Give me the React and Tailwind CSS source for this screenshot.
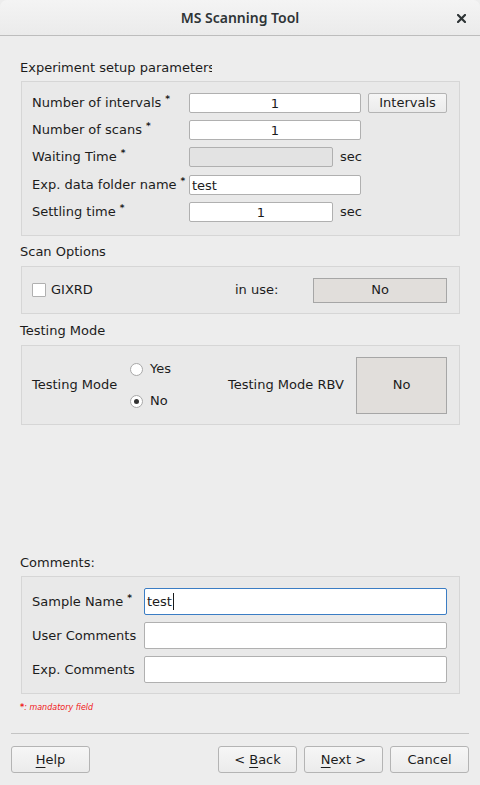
import React from "react";

const Star = () => (
  <span className="relative top-[-5px] ml-[4px] text-[9px] font-bold">*</span>
);

const Input = ({ w, value = "", center = false, disabled = false, h = "h-[20px]", focused = false }) => (
  <div
    className={`${w} ${h} rounded-[2px] border flex items-center ${
      focused ? "border-[#3b7dc4]" : "border-[#b0b0b0]"
    } ${disabled ? "bg-[#e3e3e3]" : "bg-white"} ${center ? "justify-center" : "justify-start pl-[2px]"}`}
  >
    <span className="leading-none">{value}</span>
    {focused && <span className="inline-block w-[1px] h-[17px] bg-[#1a1a1a] ml-[1px]" />}
  </div>
);

const Btn = ({ children, w = "w-[79px]" }) => (
  <div
    className={`${w} h-[27px] rounded-[3px] border border-[#b4b4b4] bg-gradient-to-b from-[#f6f6f6] to-[#ebebeb] flex items-center justify-center`}
  >
    {children}
  </div>
);

export default function App() {
  return (
    <div
      className="w-[480px] h-[785px] bg-[#ededed] flex flex-col text-[13px] text-[#1c1c1c]"
      style={{ fontFamily: '"DejaVu Sans", sans-serif' }}
    >
      {/* Title bar */}
      <div className="h-[36px] shrink-0 rounded-t-[7px] bg-gradient-to-b from-[#f4f4f4] to-[#ebebeb] border-b border-[#bdbdbd] relative flex items-center justify-center">
        <span
          className="text-[14px] font-semibold text-[#2e3436]"
          style={{ fontFamily: '"Noto Sans", sans-serif' }}
        >
          MS Scanning Tool
        </span>
        <svg className="absolute right-[14px] top-[14px]" width="9" height="9" viewBox="0 0 9 9">
          <path d="M1 1L8 8M8 1L1 8" stroke="#2e3436" strokeWidth="2.2" strokeLinecap="square" />
        </svg>
      </div>

      <div className="flex-1 flex flex-col px-[20px]">
        {/* Experiment setup */}
        <div className="mt-[24px] h-[16px] leading-[16px] w-[192px] overflow-hidden whitespace-nowrap">
          Experiment setup parameters
        </div>
        <div className="mt-[5px] ml-[1px] w-[439px] h-[155px] border border-[#d6d6d6] bg-[#e9e9e9] pl-[10px] pt-[11px] flex flex-col">
          <div className="flex items-center h-[20px]">
            <div className="w-[157px]">Number of intervals<Star /></div>
            <Input w="w-[172px]" value="1" center />
            <div className="ml-[7px]">
              <div className="w-[79px] h-[20px] rounded-[2px] border border-[#b4b4b4] bg-gradient-to-b from-[#f6f6f6] to-[#ebebeb] flex items-center justify-center">
                Intervals
              </div>
            </div>
          </div>
          <div className="flex items-center h-[20px] mt-[7px]">
            <div className="w-[157px]">Number of scans<Star /></div>
            <Input w="w-[172px]" value="1" center />
          </div>
          <div className="flex items-center h-[20px] mt-[7px]">
            <div className="w-[157px]">Waiting Time<Star /></div>
            <Input w="w-[144px]" disabled />
            <span className="ml-[7px]">sec</span>
          </div>
          <div className="flex items-center h-[20px] mt-[8px]">
            <div className="w-[157px] whitespace-nowrap">Exp. data folder name<Star /></div>
            <Input w="w-[172px]" value="test" />
          </div>
          <div className="flex items-center h-[20px] mt-[7px]">
            <div className="w-[157px]">Settling time<Star /></div>
            <Input w="w-[144px]" value="1" center />
            <span className="ml-[7px]">sec</span>
          </div>
        </div>

        {/* Scan options */}
        <div className="mt-[8px] h-[16px] leading-[16px]">Scan Options</div>
        <div className="mt-[6px] ml-[1px] w-[439px] h-[48px] border border-[#d6d6d6] bg-[#e9e9e9] pl-[10px] flex items-center">
          <div className="w-[203px] flex items-center">
            <div className="w-[14px] h-[14px] border border-[#b0b0b0] bg-white rounded-[1px]" />
            <span className="ml-[5px]">GIXRD</span>
          </div>
          <span className="w-[78px]">in use:</span>
          <div className="w-[134px] h-[25px] border border-[#a6a6a6] bg-[#e1dedb] flex items-center justify-center">
            No
          </div>
        </div>

        {/* Testing mode */}
        <div className="mt-[9px] h-[16px] leading-[16px]">Testing Mode</div>
        <div className="mt-[6px] ml-[1px] w-[439px] h-[80px] border border-[#d6d6d6] bg-[#e9e9e9] pl-[10px] flex items-center">
          <span className="w-[98px]">Testing Mode</span>
          <div className="flex flex-col gap-[14px] w-[98px]">
            <div className="flex items-center h-[18px]">
              <div className="w-[13px] h-[13px] rounded-full border border-[#a8a8a8] bg-white" />
              <span className="ml-[7px]">Yes</span>
            </div>
            <div className="flex items-center h-[18px]">
              <div className="w-[13px] h-[13px] rounded-full border border-[#a8a8a8] bg-white flex items-center justify-center">
                <div className="w-[5px] h-[5px] rounded-full bg-[#333]" />
              </div>
              <span className="ml-[7px]">No</span>
            </div>
          </div>
          <span className="w-[128px]">Testing Mode RBV</span>
          <div className="w-[91px] h-[57px] border border-[#a6a6a6] bg-[#e1dedb] flex items-center justify-center">
            No
          </div>
        </div>

        {/* Comments */}
        <div className="mt-[130px] h-[16px] leading-[16px]">Comments:</div>
        <div className="mt-[5px] ml-[1px] w-[439px] h-[118px] border border-[#d6d6d6] bg-[#e9e9e9] pl-[10px] pt-[11px] flex flex-col gap-[7px]">
          <div className="flex items-center h-[27px]">
            <div className="w-[112px]">Sample Name<Star /></div>
            <Input w="w-[303px]" h="h-[27px]" value="test" focused />
          </div>
          <div className="flex items-center h-[27px]">
            <div className="w-[112px]">User Comments</div>
            <Input w="w-[303px]" h="h-[27px]" />
          </div>
          <div className="flex items-center h-[27px]">
            <div className="w-[112px]">Exp. Comments</div>
            <Input w="w-[303px]" h="h-[27px]" />
          </div>
        </div>
        <div className="mt-[8px] h-[12px] leading-[12px] text-[8px] italic text-[#f01818]">
          <span className="not-italic font-bold">*</span>: mandatory field
        </div>
      </div>

      {/* Footer */}
      <div className="mx-[11px] border-t border-[#c4c4c4] mb-[12px]" />
      <div className="px-[11px] pb-[12px] flex items-center">
        <Btn>
          <span><span className="underline underline-offset-[3px]">H</span>elp</span>
        </Btn>
        <div className="flex-1" />
        <Btn>
          <span>&lt; <span className="underline underline-offset-[3px]">B</span>ack</span>
        </Btn>
        <div className="w-[7px]" />
        <Btn>
          <span><span className="underline underline-offset-[3px]">N</span>ext &gt;</span>
        </Btn>
        <div className="w-[7px]" />
        <Btn>Cancel</Btn>
      </div>
    </div>
  );
}
